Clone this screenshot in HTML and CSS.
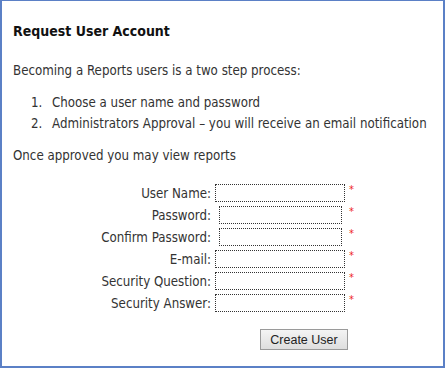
FILE: index.html
```html
<!DOCTYPE html>
<html lang="en">
<head>
  <meta charset="UTF-8">
  <title>Request User Account</title>
  <link rel="stylesheet" href="styles.css">
</head>
<body>
  <div class="frame">
    <h1>Request User Account</h1>
    <p>Becoming a Reports users is a two step process:</p>
    <ol class="steps">
      <li>Choose a user name and password</li>
      <li>Administrators Approval &ndash; you will receive an email notification</li>
    </ol>
    <p>Once approved you may view reports</p>

    <form class="signup" onsubmit="return false">
      <label for="user">User Name:</label>
      <input id="user" type="text">
      <span class="req">*</span>

      <label for="pass">Password:</label>
      <input id="pass" class="pw" type="password">
      <span class="req">*</span>

      <label for="confirm">Confirm Password:</label>
      <input id="confirm" class="pw" type="password">
      <span class="req">*</span>

      <label for="email">E-mail:</label>
      <input id="email" type="text">
      <span class="req">*</span>

      <label for="question">Security Question:</label>
      <input id="question" type="text">
      <span class="req">*</span>

      <label for="answer">Security Answer:</label>
      <input id="answer" type="text">
      <span class="req">*</span>

      <div class="actions">
        <button type="submit">Create User</button>
      </div>
    </form>
  </div>
</body>
</html>
```

FILE: styles.css
```css
* {
  box-sizing: border-box;
}

html, body {
  margin: 0;
  background: #fff;
}

.frame {
  width: 445px;
  height: 368px;
  border: 2px solid #5b80c6;
  border-top-width: 1px;
  padding: 22px 11px 0;
  font-family: 'DejaVu Sans Condensed', 'DejaVu Sans', sans-serif;
  font-size: 13.2px;
  color: #333;
}

h1 {
  margin: 0 0 24px;
  font-size: 14px;
  color: #111;
}

p {
  margin: 0 0 14px;
}

.steps {
  margin: 0 0 14px;
  padding-left: 33px;
}

.steps li {
  line-height: 21px;
  padding-left: 6px;
}

.signup {
  display: grid;
  grid-template-columns: 198px 130px 12px;
  column-gap: 4px;
  row-gap: 4px;
  align-items: center;
  margin-top: 21px;
}

.signup label {
  text-align: right;
}

.signup input {
  height: 18px;
  width: 130px;
  border: 1px dotted #333;
  background: #fff;
  margin: 0;
  padding: 0 2px;
}

.signup input.pw {
  width: 123px;
  margin-left: 4px;
}

.req {
  color: #e22;
  font-size: 11px;
  align-self: start;
  line-height: 12px;
}

.actions {
  grid-column: 2 / 4;
  padding-left: 45px;
  margin-top: 13px;
}

button {
  font-family: 'Liberation Sans', Arial, sans-serif;
  font-size: 12.5px;
  color: #222;
  width: 88px;
  height: 21px;
  padding: 0;
  border: 1px solid #9a9a9a;
  background: linear-gradient(#f4f4f4, #dedede);
}
```
